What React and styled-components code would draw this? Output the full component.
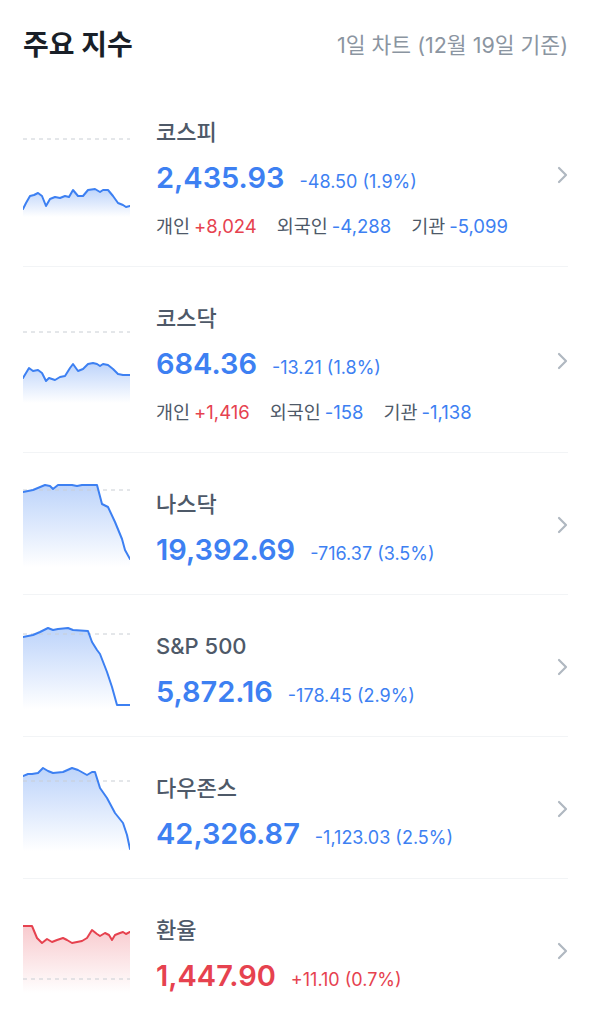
import React from 'react'
import styled, { createGlobalStyle } from 'styled-components'

const GlobalStyle = createGlobalStyle`
  body {
    margin: 0;
    background: #fff;
    font-family: Inter, "Noto Sans CJK KR", "Noto Sans", sans-serif;
    -webkit-font-smoothing: antialiased;
  }
`

const BLUE = '#3d80f2'
const RED = '#e6424f'

const indices = [
  {
    name: '코스피', value: '2,435.93', change: '-48.50 (1.9%)', up: false,
    investors: [['개인', '+8,024'], ['외국인', '-4,288'], ['기관', '-5,099']],
    base: 6,
    points: [[0,76],[3,70],[7,63],[11,62],[15,60],[19,63],[23,73],[27,66],[32,64],[37,65],[42,63],[46,64],[50,57],[55,63],[60,63],[65,57],[72,56],[77,59],[80,57],[85,57],[90,63],[95,70],[100,72],[103,74],[107,73]],
  },
  {
    name: '코스닥', value: '684.36', change: '-13.21 (1.8%)', up: false,
    investors: [['개인', '+1,416'], ['외국인', '-158'], ['기관', '-1,138']],
    base: 13,
    points: [[0,59],[3,54],[6,49],[10,52],[15,51],[19,54],[23,62],[26,59],[32,61],[37,58],[42,57],[47,49],[50,45],[55,52],[60,50],[65,45],[70,44],[74,45],[77,47],[80,45],[85,46],[90,50],[95,55],[100,56],[107,56]],
  },
  {
    name: '나스닥', value: '19,392.69', change: '-716.37 (3.5%)', up: false,
    base: 7,
    points: [[0,9],[10,7],[22,2],[27,3],[30,6],[35,2],[49,2],[54,3],[59,2],[74,2],[79,21],[85,24],[92,39],[99,56],[102,67],[107,76]],
  },
  {
    name: 'S&P 500', value: '5,872.16', change: '-178.45 (2.9%)', up: false,
    base: 9,
    points: [[0,12],[10,10],[17,7],[25,3],[30,5],[35,4],[45,3],[50,5],[65,6],[69,17],[74,25],[77,29],[84,47],[89,62],[94,80],[107,80]],
  },
  {
    name: '다우존스', value: '42,326.87', change: '-1,123.03 (2.5%)', up: false,
    base: 14,
    points: [[0,9],[5,7],[9,7],[15,6],[20,1],[25,4],[30,6],[40,5],[49,1],[55,3],[64,8],[69,5],[72,5],[77,21],[84,31],[92,46],[100,56],[104,68],[107,82]],
  },
  {
    name: '환율', value: '1,447.90', change: '+11.10 (0.7%)', up: true,
    base: 70,
    points: [[0,17],[9,17],[14,29],[19,34],[24,30],[29,33],[34,31],[40,29],[44,31],[49,34],[59,32],[64,29],[69,21],[74,25],[77,27],[82,24],[86,26],[89,31],[92,26],[97,24],[100,23],[103,25],[107,23]],
  },
]

const Page = styled.div`
  padding: 0 26px 0 23px;
`

const Header = styled.div`
  display: flex;
  align-items: center;
  justify-content: space-between;
  padding: 30px 0 21px;
  line-height: 30px;
`

const Title = styled.h2`
  margin: 0;
  font-size: 28px;
  font-weight: 700;
  color: #191f28;
`

const Caption = styled.span`
  font-size: 21.5px;
  color: #8b95a1;
`

const List = styled.ul`
  list-style: none;
  margin: 0;
  padding: 0;
`

const Row = styled.li`
  display: flex;
  border-bottom: 1px solid #f2f4f6;
  &:last-child {
    border-bottom: none;
  }
`

const ChartBox = styled.div`
  width: 107px;
  height: 84px;
  flex-shrink: 0;
  align-self: center;
  margin: 2px 26px 0 0;
  & svg {
    display: block;
  }
`

const Info = styled.div`
  flex: 1;
  display: flex;
  flex-direction: column;
  padding: 36px 0 26px;
`

const Name = styled.div`
  font-size: 22px;
  line-height: 30px;
  height: 30px;
  font-weight: 500;
  color: #4e5968;
  margin-bottom: 13px;
`

const PriceLine = styled.div`
  display: flex;
  align-items: baseline;
  gap: 15px;
  height: 36px;
`

const Price = styled.span`
  font-size: 29px;
  line-height: 36px;
  font-weight: 600;
  color: ${p => (p.$up ? RED : BLUE)};
`

const Change = styled.span`
  font-size: 18px;
  line-height: 20px;
  color: ${p => (p.$up ? RED : BLUE)};
`

const Investors = styled.div`
  display: flex;
  gap: 20px;
  margin: 17px 0 1px;
  height: 26px;
  font-size: 18.5px;
  line-height: 26px;
`

const Investor = styled.span`
  color: #4e5968;
  & b {
    font-weight: 400;
    margin-left: 4px;
    color: ${p => (p.$plus ? RED : BLUE)};
  }
`

const Chevron = styled.svg`
  flex-shrink: 0;
  align-self: center;
  margin: 2px 0 0 8px;
`

const Spark = ({ id, points, base, up }) => {
  const color = up ? RED : BLUE
  const line = points.map(([x, y], i) => `${i ? 'L' : 'M'}${x} ${y}`).join(' ')
  const area = `${line} L107 84 L0 84 Z`
  return (
    <svg width="107" height="84" viewBox="0 0 107 84">
      <defs>
        <linearGradient id={id} x1="0" y1="0" x2="0" y2="1">
          <stop offset="0" stopColor={color} stopOpacity={up ? 0.28 : 0.34} />
          <stop offset="1" stopColor={color} stopOpacity="0" />
        </linearGradient>
      </defs>
      <path d={area} fill={`url(#${id})`} />
      <line x1="0" y1={base} x2="107" y2={base} stroke="#c9ced4" strokeWidth="1" strokeDasharray="4 4" />
      <path d={line} fill="none" stroke={color} strokeWidth="2" strokeLinejoin="round" strokeLinecap="round" />
    </svg>
  )
}

const App = () => (
  <Page>
    <GlobalStyle />
    <Header>
      <Title>주요 지수</Title>
      <Caption>1일 차트 (12월 19일 기준)</Caption>
    </Header>
    <List>
      {indices.map((it, i) => (
        <Row key={it.name}>
          <ChartBox>
            <Spark id={`g${i}`} points={it.points} base={it.base} up={it.up} />
          </ChartBox>
          <Info>
            <Name>{it.name}</Name>
            <PriceLine>
              <Price $up={it.up}>{it.value}</Price>
              <Change $up={it.up}>{it.change}</Change>
            </PriceLine>
            {it.investors && (
              <Investors>
                {it.investors.map(([label, v]) => (
                  <Investor key={label} $plus={v.startsWith('+')}>
                    {label}<b>{v}</b>
                  </Investor>
                ))}
              </Investors>
            )}
          </Info>
          <Chevron width="12" height="18" viewBox="0 0 12 18">
            <path d="M3 2 L10 9 L3 16" fill="none" stroke="#b0b8c1" strokeWidth="2.2" strokeLinecap="round" strokeLinejoin="round" />
          </Chevron>
        </Row>
      ))}
    </List>
  </Page>
)

export default App
